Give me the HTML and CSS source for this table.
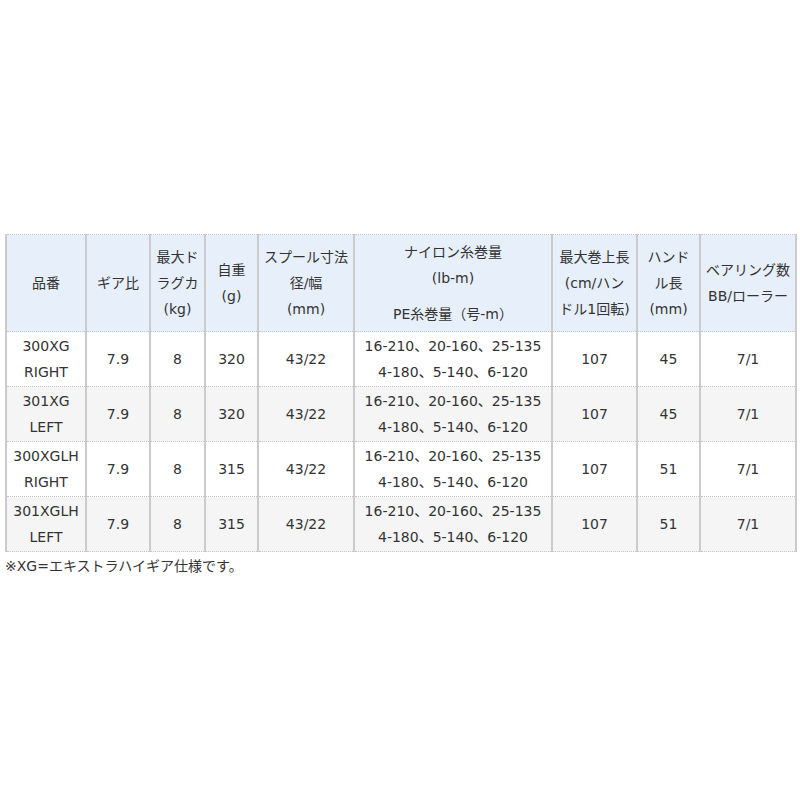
FILE: index.html
```html
<!DOCTYPE html>
<html lang="ja">
<head>
<meta charset="utf-8">
<link rel="stylesheet" href="styles.css">
</head>
<body>
<div class="wrap">
<table class="spec">
<colgroup>
<col class="c1"><col class="c2"><col class="c3"><col class="c4"><col class="c5"><col class="c6"><col class="c7"><col class="c8"><col class="c9">
</colgroup>
<thead>
<tr>
<th>品番</th>
<th>ギア比</th>
<th>最大ド<br>ラグカ<br>(kg)</th>
<th>自重<br>(g)</th>
<th>スプール寸法<br>径/幅<br>(mm)</th>
<th>ナイロン糸巻量<br>(lb-m)<div class="pe">PE糸巻量（号-m）</div></th>
<th>最大巻上長<br>(cm/ハン<br>ドル1回転)</th>
<th>ハンド<br>ル長<br>(mm)</th>
<th>ベアリング数<br>BB/ローラー</th>
</tr>
</thead>
<tbody>
<tr>
<td>300XG<br>RIGHT</td><td>7.9</td><td>8</td><td>320</td><td>43/22</td><td>16-210、20-160、25-135<br>4-180、5-140、6-120</td><td>107</td><td>45</td><td>7/1</td>
</tr>
<tr class="alt">
<td>301XG<br>LEFT</td><td>7.9</td><td>8</td><td>320</td><td>43/22</td><td>16-210、20-160、25-135<br>4-180、5-140、6-120</td><td>107</td><td>45</td><td>7/1</td>
</tr>
<tr>
<td>300XGLH<br>RIGHT</td><td>7.9</td><td>8</td><td>315</td><td>43/22</td><td>16-210、20-160、25-135<br>4-180、5-140、6-120</td><td>107</td><td>51</td><td>7/1</td>
</tr>
<tr class="alt">
<td>301XGLH<br>LEFT</td><td>7.9</td><td>8</td><td>315</td><td>43/22</td><td>16-210、20-160、25-135<br>4-180、5-140、6-120</td><td>107</td><td>51</td><td>7/1</td>
</tr>
</tbody>
</table>
<p class="note">※XG=エキストラハイギア仕様です。</p>
</div>
</body>
</html>
```
FILE: styles.css
```css
html, body {
  margin: 0;
  padding: 0;
  background: #ffffff;
}
body {
  font-family: "DejaVu Sans", "Noto Sans CJK JP", sans-serif;
  font-size: 14px;
  color: #333333;
}
.wrap {
  padding: 234px 5px 0 5px;
}
.spec {
  width: 790px;
  table-layout: fixed;
  border-collapse: collapse;
  line-height: 26px;
}
.c1 { width: 80px; }
.c2 { width: 64px; }
.c3 { width: 55px; }
.c4 { width: 53px; }
.c5 { width: 96px; }
.c6 { width: 198px; }
.c7 { width: 85px; }
.c8 { width: 63px; }
.c9 { width: 96px; }
.spec th, .spec td {
  border-left: 2px solid #cbcbcb;
  border-right: 2px solid #cbcbcb;
  border-top: 1px dotted #c4c4c4;
  border-bottom: 1px dotted #c4c4c4;
  text-align: center;
  vertical-align: middle;
  padding: 1px 0;
  font-weight: normal;
  white-space: nowrap;
}
.spec th {
  background: #e7effa;
  padding: 4px 0;
  height: 88px;
}
.spec td {
  height: 52px;
}
.spec tr.alt td {
  background: #f5f5f5;
}
.pe {
  margin-top: 10px;
}
.note {
  margin: 0;
  line-height: 26px;
  padding-top: 1px;
}
```
